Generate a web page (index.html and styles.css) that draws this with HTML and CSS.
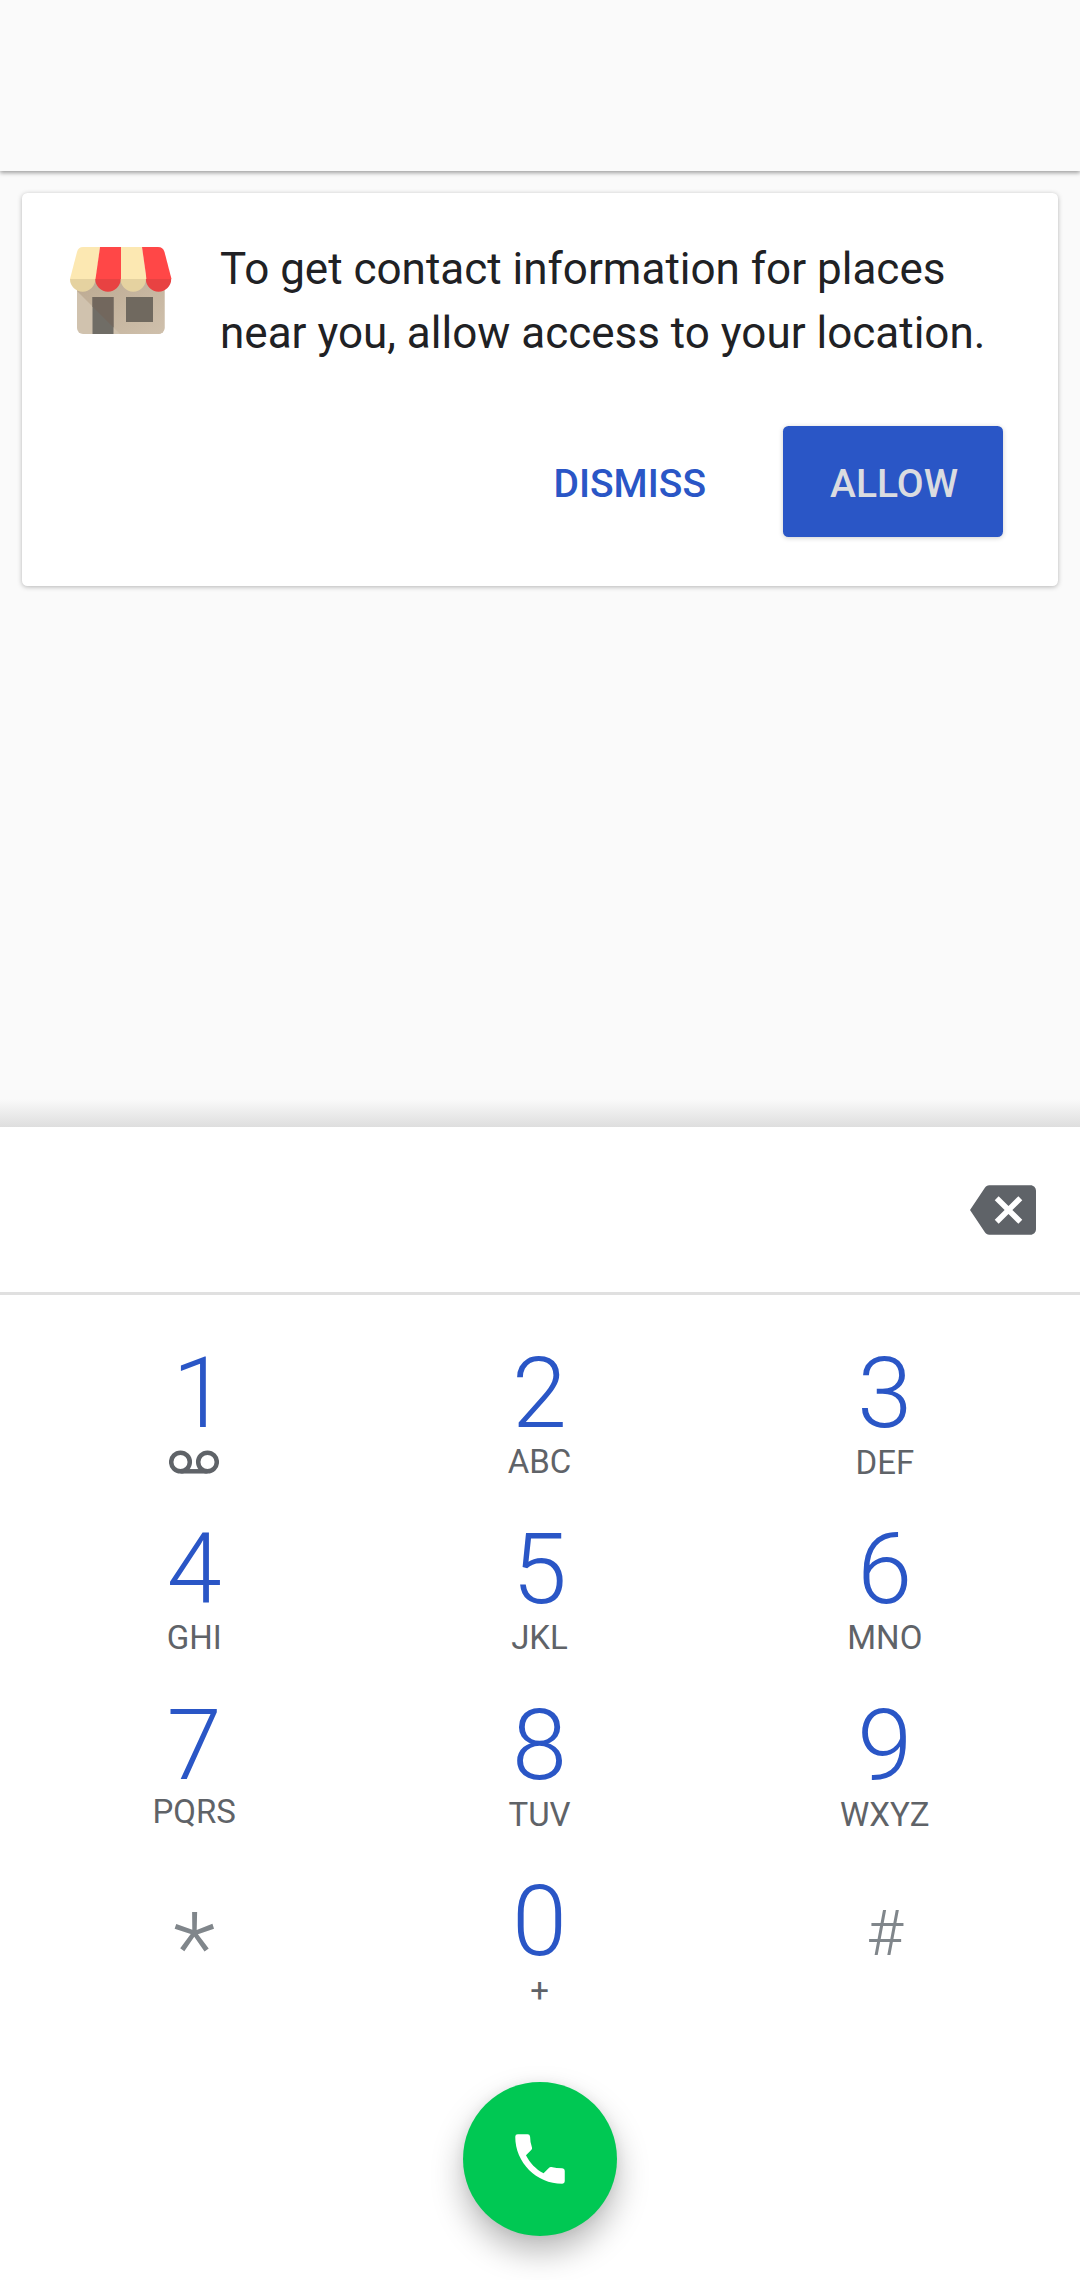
FILE: index.html
```html
<!DOCTYPE html>
<html lang="en">
<head>
<meta charset="utf-8">
<title>Phone</title>
<link rel="stylesheet" href="styles.css">
</head>
<body>
<div class="screen">
  <header class="topbar"></header>
  <main class="content">
    <section class="card">
      <div class="card-body">
        <svg class="shop" viewBox="0 0 102 88" aria-hidden="true">
          <defs><linearGradient id="shade" x1="0" y1="0" x2="1" y2="1"><stop offset="0" stop-color="#bca991"/><stop offset="1" stop-color="#cfc0ac"/></linearGradient></defs>
          <path d="M7 30h87.500v52a6 6 0 0 1-6 6H13a6 6 0 0 1-6-6z" fill="#d0c2ae"/>
          <path d="M7 30h87.500v52a6 6 0 0 1-6 6H50L7 45z" fill="url(#shade)"/>
          <path d="M22.500 51h21v37h-21z" fill="#706d66"/>
          <path d="M22.500 51h21v30.500l-21-21z" fill="#72675d"/>
          <path d="M56 51h27v25H56z" fill="#70695f"/>
          <path d="M13 1h17l-4 32H0L7 6q1.300-5 6-5z" fill="#fce8b2"/>
          <path d="M30 1h21v32H25.500z" fill="#ff4747"/>
          <path d="M51 1h21l4.500 32H51z" fill="#fce8b2"/>
          <path d="M72 1h16q5 0 6.500 5l7 27h-25z" fill="#ff4747"/>
          <path d="M0 33h25.300a12.650 12.650 0 0 1-25.300 0zM50.600 33h25.300a12.650 12.650 0 0 1-25.300 0z" fill="#e5d2a0"/>
          <path d="M25.300 33h25.300a12.650 12.650 0 0 1-25.300 0zM75.900 33h25.300a12.650 12.650 0 0 1-25.300 0z" fill="#e84242"/>
        </svg>
        <p class="message">To get contact information for places near you, allow access to your location.</p>
      </div>
      <div class="actions">
        <button class="btn btn-text">DISMISS</button>
        <button class="btn btn-filled">ALLOW</button>
      </div>
    </section>
  </main>
  <section class="dialer">
    <div class="number-field">
      <svg class="icon" viewBox="0 0 24 24" aria-label="Backspace"><path fill="#5f6368" d="M22 3H7c-.69 0-1.230.35-1.590.88L0 12l5.410 8.110c.36.53.9.89 1.590.89h15c1.100 0 2-.9 2-2V5c0-1.100-.9-2-2-2zm-3 12.590L17.590 17 14 13.410 10.410 17 9 15.590 12.590 12 9 8.410 10.410 7 14 10.590 17.590 7 19 8.410 15.410 12 19 15.590z"/></svg>
    </div>
    <div class="keypad">
      <div class="key"><span class="digit digit-one">1</span><span class="letters"><svg class="voicemail" viewBox="0 0 50 24" aria-label="Voicemail"><g fill="none" stroke="#5f6368" stroke-width="4.500"><circle cx="11.500" cy="12" r="9.300"/><circle cx="38.500" cy="12" r="9.300"/><path d="M11.500 21.300h27"/></g></svg></span></div>
      <div class="key"><span class="digit">2</span><span class="letters">ABC</span></div>
      <div class="key"><span class="digit">3</span><span class="letters letters-lowered">DEF</span></div>
      <div class="key"><span class="digit">4</span><span class="letters">GHI</span></div>
      <div class="key"><span class="digit">5</span><span class="letters">JKL</span></div>
      <div class="key"><span class="digit">6</span><span class="letters">MNO</span></div>
      <div class="key"><span class="digit">7</span><span class="letters letters-raised">PQRS</span></div>
      <div class="key"><span class="digit">8</span><span class="letters letters-lowered">TUV</span></div>
      <div class="key"><span class="digit">9</span><span class="letters letters-lowered">WXYZ</span></div>
      <div class="key"><span class="symbol star">*</span></div>
      <div class="key"><span class="digit">0</span><span class="letters letters-lowered">+</span></div>
      <div class="key"><span class="symbol hash">#</span></div>
    </div>
    <button class="call" aria-label="Call"><svg class="icon" viewBox="0 0 24 24"><path fill="#fff" d="M6.900 10.600C8.300 13.400 10.500 15.700 13.300 17.200L15.400 15.100Q15.700 14.800 16.100 14.900Q18 15.400 20.100 15.400Q21 15.500 21 16.300V20.100Q21 21 20.100 21C10.700 21 3 13.300 3 3.900Q3 3 3.900 3H7.500Q8.300 3 8.400 3.900Q8.400 6 9.100 7.900Q9.200 8.300 8.900 8.600z"/></svg></button>
  </section>
</div>
</body>
</html>
```
FILE: styles.css
```css
* { box-sizing: border-box; }

body {
  margin: 0;
  font-family: Roboto, sans-serif;
  color: #202124;
}

.screen {
  width: 1080px;
  height: 2280px;
  display: flex;
  flex-direction: column;
  background: #fafafa;
  overflow: hidden;
}

.topbar {
  height: 171px;
  flex: none;
  z-index: 1;
  background: #fafafa;
  box-shadow: 0 2px 4px rgba(0, 0, 0, 0.36);
}

.content {
  height: 956px;
  flex: none;
  padding: 22px;
  background: linear-gradient(#fafafa 928px, #dedede 956px);
}

.card {
  height: 393px;
  padding: 44px 55px 49px 48px;
  display: flex;
  flex-direction: column;
  justify-content: space-between;
  background: #fff;
  border-radius: 5.500px;
  box-shadow: 0 1px 5px rgba(0, 0, 0, 0.28);
}

.card-body {
  display: flex;
  gap: 48px;
}

.shop {
  width: 102px;
  height: 88px;
  margin-top: 9px;
  flex: none;
}

.message {
  margin: 0;
  font-size: 44px;
  line-height: 64px;
}

.actions {
  display: flex;
  justify-content: flex-end;
  gap: 33px;
}

.btn {
  height: 111px;
  border: 0;
  padding: 5px 44px 0;
  border-radius: 5.500px;
  font: 500 39px Roboto, sans-serif;
}

.btn-text {
  background: none;
  color: #2a56c6;
}

.btn-filled {
  width: 220px;
  padding: 5px 0 0 2px;
  background: #2a56c6;
  color: #dadce0;
  box-shadow: 0 1px 5px rgba(0, 0, 0, 0.2);
}

.dialer {
  flex: 1;
  display: flex;
  flex-direction: column;
  align-items: center;
  background: #fff;
}

.number-field {
  width: 100%;
  height: 168px;
  padding-right: 44px;
  display: flex;
  flex: none;
  align-items: center;
  justify-content: flex-end;
  border-bottom: 3px solid #e0e0e0;
}

.icon {
  display: block;
  width: 66px;
  height: 66px;
}

.keypad {
  width: 100%;
  height: 746px;
  padding: 48px 22.500px 0 21.500px;
  display: grid;
  grid-template-columns: repeat(3, 1fr);
  grid-auto-rows: 176px;
}

.key {
  display: flex;
  flex-direction: column;
  align-items: center;
}

.digit {
  font-size: 99px;
  font-weight: 300;
  line-height: 101px;
  color: #2a56c6;
}

.digit-one { padding-left: 11px; }

.letters {
  height: 39px;
  margin-top: -2px;
  font-size: 33px;
  line-height: 39px;
  color: #5f6368;
}

.letters-raised { margin-top: -4px; }

.letters-lowered { margin-top: -1px; }

.voicemail {
  display: block;
  width: 50px;
  height: 24px;
  margin-top: 8px;
}

.symbol {
  font-weight: 300;
  color: #80868b;
}

.star {
  font-size: 99px;
  line-height: 154px;
}

.hash {
  font-size: 63px;
  line-height: 125px;
}

.call {
  width: 154px;
  height: 154px;
  margin-top: 41px;
  padding: 44px;
  border: 0;
  border-radius: 50%;
  background: #00c853;
  box-shadow: 0 16px 32px rgba(0, 0, 0, 0.28), 0 0 12px rgba(0, 0, 0, 0.06);
}
```
